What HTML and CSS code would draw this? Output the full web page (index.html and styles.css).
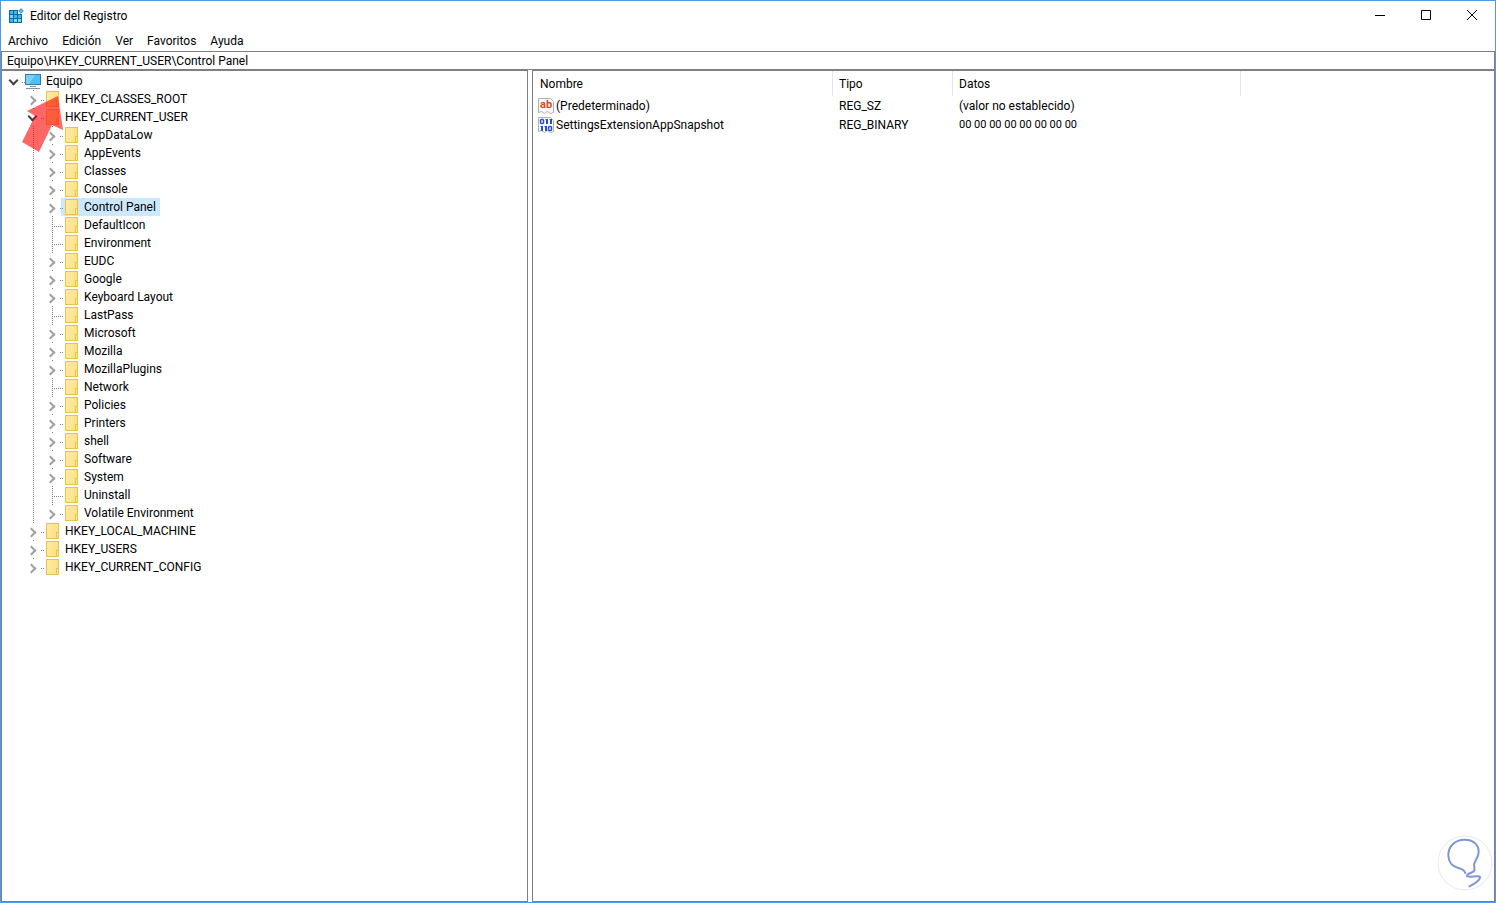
FILE: index.html
```html
<!DOCTYPE html>
<html lang="es">
<head>
  <meta charset="UTF-8">
  <title>Editor del Registro</title>
  <link rel="stylesheet" href="styles.css">
</head>
<body>
  <div class="window">
    <header class="titlebar">
      <svg class="app-icon" width="16" height="16" viewBox="0 0 16 16">
        <path fill="#0a6aa1" d="M1 2h9v4h4v9H1z"/>
        <path fill="#3fb8ec" d="M2 3h3v3H2zM6 3h3v3H6zM6 7h3v3H6zM10 7h3v3h-3zM2 11h3v3H2z"/>
        <path fill="#7fd3f7" d="M2 7h3v3H2zM6 11h3v3H6zM10 11h3v3h-3z"/>
        <path fill="#5cc4ee" stroke="#2a86b5" d="M13 .7 15.300 3 13 5.300 10.700 3z"/>
      </svg>
      <h1>Editor del Registro</h1>
      <div class="controls">
        <button type="button" aria-label="Minimizar"><svg width="12" height="12" viewBox="0 0 12 12"><path d="M1 5.500h10"/></svg></button>
        <button type="button" aria-label="Maximizar"><svg width="12" height="12" viewBox="0 0 12 12"><path d="M1.500.500h9v9h-9z"/></svg></button>
        <button type="button" aria-label="Cerrar"><svg width="12" height="12" viewBox="0 0 12 12"><path d="M1 0l10 10M11 0L1 10"/></svg></button>
      </div>
    </header>

    <nav class="menubar">
      <button type="button">Archivo</button>
      <button type="button">Edición</button>
      <button type="button">Ver</button>
      <button type="button">Favoritos</button>
      <button type="button">Ayuda</button>
    </nav>

    <input class="address" type="text" aria-label="Ruta" value="Equipo\HKEY_CURRENT_USER\Control Panel">

    <main class="panes">
      <section class="tree-pane">
        <ul class="tree">
          <li>
            <div class="row root"><button class="toggle open" aria-label="Contraer"></button><span class="key">
              <svg width="16" height="16" viewBox="0 0 16 16">
                <path fill="#2f7ea8" d="M0 1h16v11H0z"/>
                <path fill="#4fc0f5" d="M1 2h14v9H1z"/>
                <path fill="#7ad2fa" d="M1 2h9L4 11H1z"/>
                <path fill="#7a96a5" d="M5 13h6v1H5zM1 15h14v1H1z"/>
              </svg>Equipo</span></div>
            <ul>
              <li><div class="row"><button class="toggle" aria-label="Expandir"></button><span class="key"><i class="folder"></i>HKEY_CLASSES_ROOT</span></div></li>
              <li>
                <div class="row"><button class="toggle open" aria-label="Contraer"></button><span class="key"><i class="folder"></i>HKEY_CURRENT_USER</span></div>
                <ul class="guide">
                  <li><div class="row"><button class="toggle" aria-label="Expandir"></button><span class="key"><i class="folder"></i>AppDataLow</span></div></li>
                  <li><div class="row"><button class="toggle" aria-label="Expandir"></button><span class="key"><i class="folder"></i>AppEvents</span></div></li>
                  <li><div class="row"><button class="toggle" aria-label="Expandir"></button><span class="key"><i class="folder"></i>Classes</span></div></li>
                  <li><div class="row"><button class="toggle" aria-label="Expandir"></button><span class="key"><i class="folder"></i>Console</span></div></li>
                  <li><div class="row"><button class="toggle" aria-label="Expandir"></button><span class="key selected"><i class="folder"></i>Control Panel</span></div></li>
                  <li><div class="row"><span class="leaf"></span><span class="key"><i class="folder"></i>DefaultIcon</span></div></li>
                  <li><div class="row"><span class="leaf"></span><span class="key"><i class="folder"></i>Environment</span></div></li>
                  <li><div class="row"><button class="toggle" aria-label="Expandir"></button><span class="key"><i class="folder"></i>EUDC</span></div></li>
                  <li><div class="row"><button class="toggle" aria-label="Expandir"></button><span class="key"><i class="folder"></i>Google</span></div></li>
                  <li><div class="row"><button class="toggle" aria-label="Expandir"></button><span class="key"><i class="folder"></i>Keyboard Layout</span></div></li>
                  <li><div class="row"><span class="leaf"></span><span class="key"><i class="folder"></i>LastPass</span></div></li>
                  <li><div class="row"><button class="toggle" aria-label="Expandir"></button><span class="key"><i class="folder"></i>Microsoft</span></div></li>
                  <li><div class="row"><button class="toggle" aria-label="Expandir"></button><span class="key"><i class="folder"></i>Mozilla</span></div></li>
                  <li><div class="row"><button class="toggle" aria-label="Expandir"></button><span class="key"><i class="folder"></i>MozillaPlugins</span></div></li>
                  <li><div class="row"><span class="leaf"></span><span class="key"><i class="folder"></i>Network</span></div></li>
                  <li><div class="row"><button class="toggle" aria-label="Expandir"></button><span class="key"><i class="folder"></i>Policies</span></div></li>
                  <li><div class="row"><button class="toggle" aria-label="Expandir"></button><span class="key"><i class="folder"></i>Printers</span></div></li>
                  <li><div class="row"><button class="toggle" aria-label="Expandir"></button><span class="key"><i class="folder"></i>shell</span></div></li>
                  <li><div class="row"><button class="toggle" aria-label="Expandir"></button><span class="key"><i class="folder"></i>Software</span></div></li>
                  <li><div class="row"><button class="toggle" aria-label="Expandir"></button><span class="key"><i class="folder"></i>System</span></div></li>
                  <li><div class="row"><span class="leaf"></span><span class="key"><i class="folder"></i>Uninstall</span></div></li>
                  <li><div class="row"><button class="toggle" aria-label="Expandir"></button><span class="key"><i class="folder"></i>Volatile Environment</span></div></li>
                </ul>
              </li>
              <li><div class="row"><button class="toggle" aria-label="Expandir"></button><span class="key"><i class="folder"></i>HKEY_LOCAL_MACHINE</span></div></li>
              <li><div class="row"><button class="toggle" aria-label="Expandir"></button><span class="key"><i class="folder"></i>HKEY_USERS</span></div></li>
              <li><div class="row"><button class="toggle" aria-label="Expandir"></button><span class="key"><i class="folder"></i>HKEY_CURRENT_CONFIG</span></div></li>
            </ul>
          </li>
        </ul>
        <svg class="pointer" width="42" height="57" viewBox="0 0 42 57">
          <path fill="#f00" fill-opacity=".6" d="M36 0l5 34-11-5-13 27L0 46l13-26-8-5z"/>
        </svg>
      </section>

      <section class="values-pane">
        <table class="values">
          <thead>
            <tr><th class="col-name">Nombre</th><th class="col-type">Tipo</th><th class="col-data">Datos</th><th></th></tr>
          </thead>
          <tbody>
            <tr>
              <td><span class="value-name">
                <svg width="16" height="16" viewBox="0 0 16 16">
                  <path fill="#fafafa" stroke="#b0b0b0" d="M.5.500h12l3 3v11l-3 1-3-2-3 2-3-2-3 1z"/>
                  <text x="2" y="10" class="glyph-sz">ab</text>
                </svg>(Predeterminado)</span></td>
              <td>REG_SZ</td>
              <td>(valor no establecido)</td>
              <td></td>
            </tr>
            <tr>
              <td><span class="value-name">
                <svg width="16" height="16" viewBox="0 0 16 16">
                  <path fill="#fafafa" stroke="#b0b0b0" d="M.5.500h12l3 3v11l-3 1-3-2-3 2-3-2-3 1z"/>
                  <g fill="none" stroke="#2a50d8">
                    <rect x="2.500" y="2.500" width="3" height="4" rx="1" stroke-width="1.500"/>
                    <rect x="10.500" y="9.500" width="3" height="4" rx="1" stroke-width="1.500"/>
                    <path stroke-width="2" d="M9 2v5M13 2v5M4 9v5M8 9v5"/>
                    <path d="M7.500 2.500H9M11.500 2.500H13M2.500 9.500H4M6.500 9.500H8"/>
                  </g>
                </svg>SettingsExtensionAppSnapshot</span></td>
              <td>REG_BINARY</td>
              <td class="bytes">00 00 00 00 00 00 00 00</td>
              <td></td>
            </tr>
          </tbody>
        </table>
      </section>
    </main>

    <svg class="watermark" width="56" height="56" viewBox="52 31 168 168">
      <circle cx="136" cy="115" r="81" fill="#fff" stroke="#e4e9f5" stroke-width="3"/>
      <path fill="none" stroke="#8096d2" stroke-width="6" stroke-linecap="round" d="M137 145c-4-12-13-14-23-16-16-3-27-17-28-36-1-28 20-48 49-48 25 0 42 14 42 36 0 16-9 23-13 35-3 9 4 16-1 23-5 6-20 7-21 14-1 8 40-4 39 5-1 10-18 20-32 27"/>
    </svg>
  </div>
</body>
</html>
```
FILE: styles.css
```css
*,
*::before,
*::after {
  box-sizing: border-box;
}

body {
  margin: 0;
  font-family: Roboto, "Open Sans", sans-serif;
  font-size: 12px;
  line-height: 18px;
  color: #000;
}

button {
  padding: 0;
  border: none;
  background: none;
  font: inherit;
  color: inherit;
}

.window {
  position: relative;
  display: flex;
  flex-direction: column;
  height: 100vh;
  border: 1px solid #4a9af0;
  background: #fff;
}

/* title and menus */
.titlebar {
  display: flex;
  align-items: center;
  height: 30px;
  padding-left: 7px;
}

.titlebar h1 {
  flex: 1;
  margin: 0 0 0 6px;
  font-size: 12px;
  font-weight: normal;
}

.controls {
  display: flex;
}

.controls button {
  display: flex;
  align-items: center;
  justify-content: center;
  width: 46px;
  height: 30px;
}

.controls path {
  fill: none;
  stroke: #000;
}

.menubar {
  display: flex;
  gap: 14px;
  height: 20px;
  padding-left: 7px;
}

.address {
  height: 19px;
  padding: 0 5px;
  border: 1px solid #7f7f86;
  font: inherit;
  color: inherit;
  outline: none;
}

/* panes */
.panes {
  display: flex;
  flex: 1;
  gap: 4px;
  min-height: 0;
}

.tree-pane,
.values-pane {
  border: 1px solid #7f7f86;
  overflow: auto;
}

.tree-pane {
  position: relative;
  flex: 0 0 527px;
  padding: 1px 0 0 2px;
}

.values-pane {
  flex: 1;
}

/* key tree */
.tree,
.tree ul {
  margin: 0;
  padding: 0;
  list-style: none;
}

.tree ul {
  padding-left: 19px;
}

.guide {
  background: repeating-linear-gradient(#808080 0 1px, transparent 1px 2px) 10px 0 / 1px 100% no-repeat;
}

.row {
  display: flex;
  height: 18px;
}

.toggle,
.leaf {
  position: relative;
  z-index: 1;
  flex: none;
  width: 21px;
  height: 18px;
  margin-right: -2px;
}

.toggle {
  background:
    repeating-linear-gradient(90deg, #808080 0 1px, transparent 1px 2px) 18px 10px / 3px 1px no-repeat,
    linear-gradient(#808080, #808080) 10px 0 / 1px 1px no-repeat;
}

.root .toggle {
  background-size: 3px 1px, 0 0;
}

.toggle::before {
  content: "";
  position: absolute;
  left: 5px;
  top: 7px;
  width: 7px;
  height: 7px;
  border: solid #a0a0a0;
  border-width: 2px 2px 0 0;
  transform: rotate(45deg);
}

.toggle.open::before {
  left: 6px;
  top: 5px;
  border-color: #404040;
  transform: rotate(135deg);
}

.leaf {
  background:
    repeating-linear-gradient(#808080 0 1px, transparent 1px 2px) 10px 0 / 1px 100% no-repeat,
    repeating-linear-gradient(90deg, #808080 0 1px, transparent 1px 2px) 10px 10px / 11px 1px no-repeat;
}

.key {
  display: flex;
  align-items: center;
  gap: 5px;
  padding: 0 4px 0 2px;
}

.key.selected {
  background: #cce8ff;
}

.folder {
  position: relative;
  width: 13px;
  height: 16px;
  margin: 0 1px 0 2px;
  border: 1px solid #e8c34c;
  background: linear-gradient(100deg, #ffeba5, #ffdf84);
}

.folder::after {
  content: "";
  position: absolute;
  right: -1px;
  bottom: -1px;
  width: 3px;
  height: 7px;
  border: 1px solid #e8c34c;
  background: #ffe9a0;
}

.pointer {
  position: absolute;
  left: 20px;
  top: 25px;
  z-index: 2;
}

/* value list */
.values {
  width: 100%;
  border-collapse: separate;
  border-spacing: 0;
  table-layout: fixed;
}

.values th {
  height: 25px;
  padding: 0 6px;
  border-right: 1px solid #e5e5e5;
  font-weight: normal;
  text-align: left;
}

.values th:last-child {
  border-right: none;
}

.values .col-name {
  width: 300px;
  padding-left: 7px;
}

.values .col-type {
  width: 120px;
}

.values .col-data {
  width: 288px;
}

.values td {
  height: 19px;
  padding: 0 6px;
}

.values td:first-child {
  padding-left: 5px;
}

.values .bytes {
  font-size: 11px;
}

.value-name {
  display: flex;
  align-items: center;
  gap: 2px;
}

.glyph-sz {
  font-size: 11px;
  font-weight: bold;
  fill: #d64a1e;
}

.watermark {
  position: absolute;
  right: 2px;
  bottom: 11px;
}
```
